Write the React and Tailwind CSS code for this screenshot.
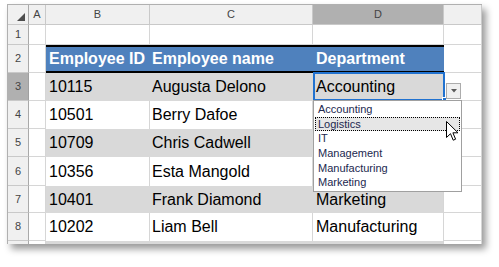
import React from 'react';

// D4..D6 sit under the open list, so they stay empty here
const rows = [
  { n: 3, id: '10115', name: 'Augusta Delono', dept: 'Accounting', band: true, active: true },
  { n: 4, id: '10501', name: 'Berry Dafoe', dept: '', band: false },
  { n: 5, id: '10709', name: 'Chris Cadwell', dept: '', band: true },
  { n: 6, id: '10356', name: 'Esta Mangold', dept: '', band: false },
  { n: 7, id: '10401', name: 'Frank Diamond', dept: 'Marketing', band: true },
  { n: 8, id: '10202', name: 'Liam Bell', dept: 'Manufacturing', band: false },
];

const options = ['Accounting', 'Logistics', 'IT', 'Management', 'Manufacturing', 'Marketing'];

const headCell = 'flex items-center justify-center border-r border-b border-[#c9c9c9] text-[11px] text-[#444]';
const gridCell = 'border-r border-b border-[#d6d6d6] bg-white';

const RowHead = ({ n, active }) => (
  <div className={`${headCell} ${active ? 'bg-[#b0b0b0] border-r-[#9f9f9f]' : 'bg-[#f0f0f0] border-r-[#a9a9a9]'}`}>{n}</div>
);

const DataCell = ({ band, children, last, pad = 'pl-[3px]' }) => {
  let cls = 'flex items-center text-[16px] leading-none text-black whitespace-nowrap overflow-hidden ' + pad;
  if (band) {
    cls += last ? ' bg-[#d9d9d9] border-r border-[#d6d6d6]' : ' bg-[#d9d9d9] border-r border-[#d9d9d9]';
  } else {
    cls += ' bg-white border-r border-[#d6d6d6]';
  }
  return <div className={cls}>{children}</div>;
};

const Cursor = () => (
  <svg width="13" height="21" viewBox="0 0 13 21" className="absolute left-[446px] top-[121px]">
    <path d="M0.5 0.5 L0.5 16.5 L4.5 12.7 L7.2 19.2 L9.6 18.2 L6.9 11.8 L12 11.8 Z" fill="#fff" stroke="#000" strokeWidth="1" strokeLinejoin="round" />
  </svg>
);

export default function App() {
  return (
    <div className="w-[499px] h-[267px] bg-white overflow-hidden relative font-['Liberation_Sans',Arial,sans-serif]">
      <div className="ml-[7px] mt-[4px] w-[475px] border-t border-l border-[#b0b0b0] shadow-[4px_5px_7px_rgba(0,0,0,0.4)] bg-white">
        <div className="grid grid-cols-[21px_17px_104px_163px_131px_38px] grid-rows-[20px_20px_28px_28px_28px_28px_29px_27px_28px_3px]">
          {/* column headers */}
          <div className={`${headCell} bg-[#f0f0f0] border-r-[#a9a9a9] relative`}>
            <svg width="8" height="8" viewBox="0 0 8 8" className="absolute right-[3px] bottom-[3px]">
              <path d="M8 0 L8 8 L0 8 Z" fill="#4d4d4d" />
            </svg>
          </div>
          <div className={`${headCell} bg-[#f0f0f0]`}>A</div>
          <div className={`${headCell} bg-[#f0f0f0]`}>B</div>
          <div className={`${headCell} bg-[#f0f0f0]`}>C</div>
          <div className={`${headCell} bg-[#b0b0b0]`}>D</div>
          <div className={`${headCell} bg-[#f0f0f0]`}></div>

          {/* row 1 */}
          <RowHead n={1} />
          <div className={gridCell}></div>
          <div className={gridCell}></div>
          <div className={gridCell}></div>
          <div className={gridCell}></div>
          <div className={gridCell}></div>

          {/* row 2: table header */}
          <RowHead n={2} />
          <div className={gridCell}></div>
          <div className="flex items-center pl-[3px] bg-[#4f81bd] border-t-2 border-b-2 border-black text-white font-bold text-[16px] leading-none whitespace-nowrap">Employee ID</div>
          <div className="flex items-center pl-[2px] bg-[#4f81bd] border-t-2 border-b-2 border-black text-white font-bold text-[16px] leading-none whitespace-nowrap">Employee name</div>
          <div className="flex items-center pl-[3px] bg-[#4f81bd] border-t-2 border-b-2 border-black text-white font-bold text-[16px] leading-none whitespace-nowrap">Department</div>
          <div className={gridCell}></div>

          {rows.map((r) => (
            <React.Fragment key={r.n}>
              <RowHead n={r.n} active={r.active} />
              <div className={gridCell}></div>
              <DataCell band={r.band}>{r.id}</DataCell>
              <DataCell band={r.band} pad="pl-[2px]">{r.name}</DataCell>
              <DataCell band={r.band} last>{r.dept}</DataCell>
              <div className={gridCell}></div>
            </React.Fragment>
          ))}

          {/* row 9, cut off */}
          <div className="bg-[#f0f0f0] border-r border-[#a9a9a9]"></div>
          <div className="bg-white border-r border-[#d6d6d6]"></div>
          <div className="bg-[#d9d9d9]"></div>
          <div className="bg-[#d9d9d9]"></div>
          <div className="bg-[#d9d9d9] border-r border-[#d6d6d6]"></div>
          <div className="bg-white border-r border-[#d6d6d6]"></div>
        </div>
      </div>

      {/* active cell selection */}
      <div className="absolute left-[313px] top-[72px] w-[132px] h-[29px] border-2 border-[#2172d0]"></div>
      <div className="absolute left-[442px] top-[97px] w-[5px] h-[5px] bg-[#2172d0] border border-white"></div>

      {/* dropdown button */}
      <div className="absolute left-[446px] top-[83px] w-[15px] h-[16px] border border-[#acacac] bg-[#f0f0f0] flex items-center justify-center">
        <svg width="6" height="4" viewBox="0 0 6 4">
          <path d="M0 0 L6 0 L3 3.5 Z" fill="#5a5a5a" />
        </svg>
      </div>

      {/* list box */}
      <div className="absolute left-[313px] top-[100px] w-[149px] h-[92px] bg-white border border-[#a0a0a0] p-px flex flex-col">
        {options.map((o) => (
          <div
            key={o}
            className={`h-[15px] flex items-center pl-[2px] text-[11px] leading-none text-[#22284f] ${
              o === 'Logistics' ? 'bg-[#e6e6e6] border border-dotted border-black' : 'border border-transparent'
            }`}
          >
            {o}
          </div>
        ))}
      </div>

      <Cursor />
    </div>
  );
}
